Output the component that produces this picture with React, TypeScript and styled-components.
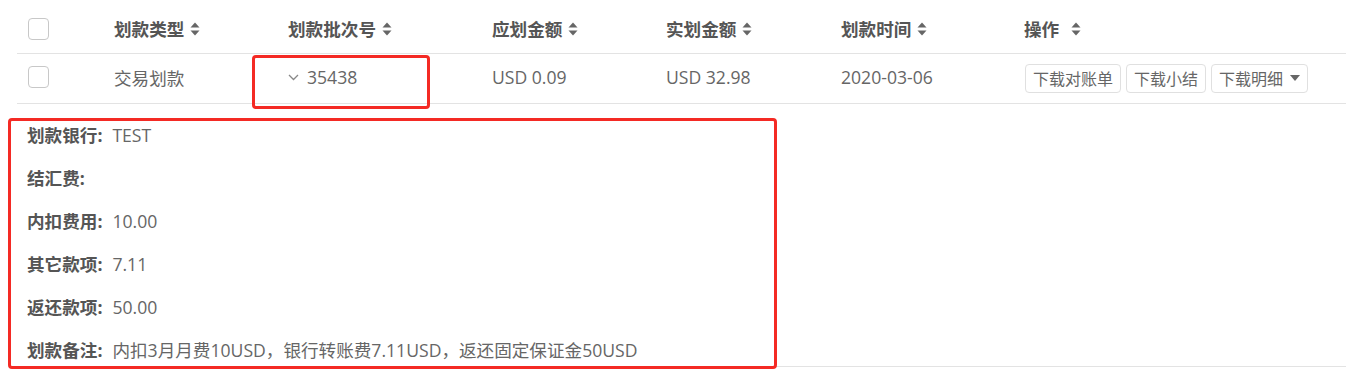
import React from 'react';
import styled, { createGlobalStyle } from 'styled-components';

const GlobalStyle = createGlobalStyle`
  body {
    margin: 0;
    background: #fff;
    font-family: "Open Sans", "Noto Sans CJK SC", sans-serif;
  }
`;

const Page = styled.div`
  position: relative;
  width: 1346px;
  height: 378px;
  overflow: hidden;
  padding-left: 17px;
  box-sizing: border-box;
`;

const Table = styled.div`
  width: 100%;
`;

const Row = styled.div<{ $height: number; $head?: boolean }>`
  display: grid;
  grid-template-columns: 87px 174px 204px 174px 175px 183px 1fr;
  height: ${(p) => p.$height}px;
  border-bottom: 1px solid #e3e3e3;
  align-items: center;
  padding-top: ${(p) => (p.$head ? 4 : 0)}px;
  padding-bottom: ${(p) => (p.$head ? 0 : 3)}px;
  box-sizing: border-box;
`;

const Cell = styled.div<{ $head?: boolean }>`
  display: flex;
  align-items: center;
  padding-left: 10px;
  font-size: 17.6px;
  font-weight: ${(p) => (p.$head ? 700 : 400)};
  color: ${(p) => (p.$head ? '#555' : '#666')};
  white-space: nowrap;
`;

const CheckCell = styled.div`
  padding-left: 11px;
  display: flex;
  align-items: center;
`;

const Checkbox = styled.span`
  display: inline-block;
  width: 19px;
  height: 20px;
  border: 1px solid #c8c8c8;
  border-radius: 4px;
  background: #fff;
`;

const SortIcon = styled.svg<{ $gap?: number }>`
  margin-left: ${(p) => p.$gap ?? 6}px;
  flex: none;
`;

const Expander = styled.svg`
  margin-right: 8px;
  flex: none;
`;

const Actions = styled.div`
  display: flex;
  gap: 5px;
  padding-left: 11px;
  padding-top: 2px;
`;

const ActionButton = styled.button`
  display: flex;
  align-items: center;
  height: 29px;
  padding: 0 7px;
  font-family: "Open Sans", "Noto Sans CJK SC", sans-serif;
  font-size: 16px;
  color: #666;
  background: #fff;
  border: 1px solid #e0e0e0;
  border-radius: 4px;
  cursor: pointer;
`;

const Caret = styled.svg`
  margin-left: 7px;
`;

const Detail = styled.div`
  height: 263px;
  border-bottom: 1px solid #e3e3e3;
  box-sizing: border-box;
  padding: 20px 0 0 10px;
  display: flex;
  flex-direction: column;
  gap: 21px;
`;

const DetailLine = styled.div`
  height: 22px;
  line-height: 22px;
  font-size: 17.6px;
  color: #666;
  white-space: nowrap;
`;

const Label = styled.span`
  font-weight: 700;
  color: #555;
  margin-right: 10px;
`;

const Highlight = styled.div<{ $x: number; $y: number; $w: number; $h: number }>`
  position: absolute;
  left: ${(p) => p.$x}px;
  top: ${(p) => p.$y}px;
  width: ${(p) => p.$w}px;
  height: ${(p) => p.$h}px;
  border: 3px solid #f42a24;
  border-radius: 4px;
  box-sizing: border-box;
  pointer-events: none;
`;

const Sort = ({ gap }: { gap?: number }) => (
  <SortIcon $gap={gap} width="10" height="14" viewBox="0 0 10 14">
    <path d="M5 0.5 L9.5 5.5 H0.5 Z" fill="#666" />
    <path d="M5 13.5 L9.5 8.5 H0.5 Z" fill="#666" />
  </SortIcon>
);

const headers = ['划款类型', '划款批次号', '应划金额', '实划金额', '划款时间'];

const details: [string, string][] = [
  ['划款银行:', 'TEST'],
  ['结汇费:', ''],
  ['内扣费用:', '10.00'],
  ['其它款项:', '7.11'],
  ['返还款项:', '50.00'],
  ['划款备注:', '内扣3月月费10USD，银行转账费7.11USD，返还固定保证金50USD'],
];

export default function App() {
  return (
    <Page>
      <GlobalStyle />
      <Table>
        <Row $height={54} $head>
          <CheckCell>
            <Checkbox />
          </CheckCell>
          {headers.map((h) => (
            <Cell $head key={h}>
              {h}
              <Sort />
            </Cell>
          ))}
          <Cell $head>
            操作
            <Sort gap={12} />
          </Cell>
        </Row>
        <Row $height={50}>
          <CheckCell>
            <Checkbox />
          </CheckCell>
          <Cell>交易划款</Cell>
          <Cell>
            <Expander width="11" height="7" viewBox="0 0 11 7">
              <path d="M1 1 L5.5 5.5 L10 1" stroke="#888" strokeWidth="1.3" fill="none" />
            </Expander>
            35438
          </Cell>
          <Cell>USD 0.09</Cell>
          <Cell>USD 32.98</Cell>
          <Cell>2020-03-06</Cell>
          <Actions>
            <ActionButton>下载对账单</ActionButton>
            <ActionButton>下载小结</ActionButton>
            <ActionButton>
              下载明细
              <Caret width="10" height="6" viewBox="0 0 10 6">
                <path d="M0 0 H10 L5 6 Z" fill="#666" />
              </Caret>
            </ActionButton>
          </Actions>
        </Row>
        <Detail>
          {details.map(([label, value]) => (
            <DetailLine key={label}>
              <Label>{label}</Label>
              {value}
            </DetailLine>
          ))}
        </Detail>
      </Table>
      <Highlight $x={252} $y={55} $w={178} $h={54} />
      <Highlight $x={8} $y={118} $w={769} $h={251} />
    </Page>
  );
}
